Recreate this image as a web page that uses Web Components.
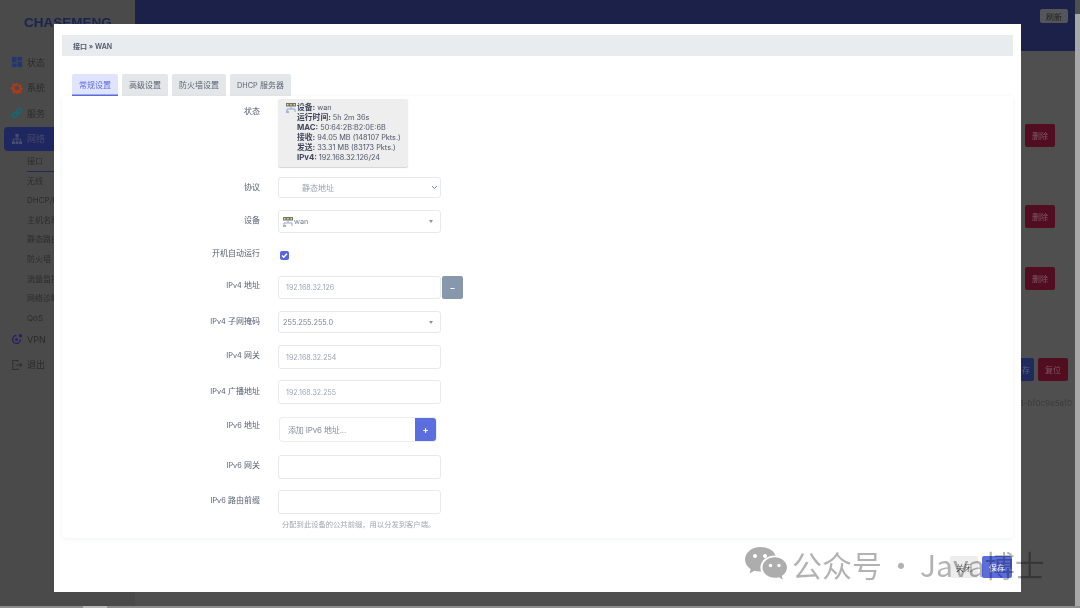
<!DOCTYPE html>
<html lang="zh">
<head>
<meta charset="utf-8">
<title>接口 » WAN</title>
<style>
html, body { margin: 0; height: 608px; overflow: hidden; background: #4f4f4f; }
body { font-family: Inter, "Noto Sans CJK SC", sans-serif; font-size: 8px; }
app-shell { filter: blur(.3px); }
.r1 { margin-top: 10px; } .r2 { margin-top: 11px; } .r3 { margin-top: 12px; }
.r4 { margin-top: 14px; } .r5 { margin-top: 15px; } .r6 { margin-top: 17px; }
</style>
</head>
<body>
<app-shell>
  <side-nav slot="side">
    <nav-item icon="grid" color="#21376f">状态</nav-item>
    <nav-item icon="gear" color="#a83a1e">系统</nav-item>
    <nav-item icon="link" color="#116a72">服务</nav-item>
    <nav-item icon="tree" color="#4a5070" active>网络</nav-item>
    <sub-list>
      <span class="on">接口</span><span>无线</span><span>DHCP/DNS</span><span>主机名映射</span><span>静态路由</span>
      <span>防火墙</span><span>流量监控</span><span>网络诊断</span><span>QoS</span>
    </sub-list>
    <nav-item icon="globe" color="#2a1d6e">VPN</nav-item>
    <nav-item icon="exit" color="#2f2f2f">退出</nav-item>
  </side-nav>
  <back-page slot="main"></back-page>
  <modal-dialog slot="modal">
    <span slot="crumb">接口 » WAN</span>
    <tab-strip slot="tabs"></tab-strip>
    <form-row label="状态" ly="7"><status-card></status-card></form-row>
    <form-row class="r1" label="协议" h="21"><select-field chevron>静态地址</select-field></form-row>
    <form-row class="r3" label="设备" h="23"><select-field dev dark>wan</select-field></form-row>
    <form-row class="r6" label="开机自动运行" h="11" ly="-2"><check-box></check-box></form-row>
    <form-row class="r5" label="IPv4 地址" h="23" ly="4"><text-field>192.168.32.126</text-field><icon-btn tone="grey">–</icon-btn></form-row>
    <form-row class="r3" label="IPv4 子网掩码" h="22"><select-field dark>255.255.255.0</select-field></form-row>
    <form-row class="r3" label="IPv4 网关" h="24"><text-field>192.168.32.254</text-field></form-row>
    <form-row class="r2" label="IPv4 广播地址" h="24" ly="6"><text-field>192.168.32.255</text-field></form-row>
    <form-row class="r4" label="IPv6 地址" h="23" ly="2"><add-field>添加 IPv6 地址...</add-field></form-row>
    <form-row class="r4" label="IPv6 网关" h="24"><text-field></text-field></form-row>
    <form-row class="r2" label="IPv6 路由前缀" h="24"><text-field></text-field></form-row>
    <form-hint>分配到此设备的公共前缀，用以分发到客户端。</form-hint>
    <foot-btn slot="foot">关闭</foot-btn>
    <foot-btn slot="foot" primary>保存</foot-btn>
  </modal-dialog>
  <wechat-mark slot="mark"></wechat-mark>
</app-shell>

<script>
function shadow(el, html) {
    el.attachShadow({mode: 'open'}).innerHTML = html;
}

// latin runs are set smaller than the CJK ones, the reference font is narrower than Inter
function latin(text) {
    return text.replace(/[A-Za-z0-9.»\/]+/g, m => `<span class="l">${m}</span>`);
}

const NAV_ICONS = {
    grid: '<rect x="1" y="1" width="5" height="6"/><rect x="7" y="1" width="5" height="4"/><rect x="1" y="8" width="5" height="4"/><rect x="7" y="6" width="5" height="6"/>',
    gear: '<path fill-rule="evenodd" d="M5.500 1h2l.3 1.500 1.200.5 1.300-.8 1.400 1.400-.8 1.300.5 1.200 1.500.3v2l-1.500.3-.5 1.200.8 1.300-1.400 1.400-1.300-.8-1.200.5-.3 1.500h-2l-.3-1.500-1.200-.5-1.300.8-1.400-1.400.8-1.300-.5-1.200L0 7.500v-2l1.500-.3.5-1.200-.8-1.300 1.400-1.400 1.300.8 1.200-.5zM6.500 4a2.500 2.500 0 1 0 0 5 2.500 2.500 0 0 0 0-5z"/>',
    link: '<path fill="none" stroke="currentColor" stroke-width="1.600" d="M5.200 7.800l2.600-2.600M8 2.200a1.900 1.900 0 0 1 2.800 2.800L9.600 6.200A1.900 1.900 0 0 1 6.900 3.400zM3.400 6.900a1.900 1.900 0 0 1 2.700 2.700L4.900 10.800A1.900 1.900 0 0 1 2.200 8z"/>',
    tree: '<rect x="4.800" y="1" width="3.400" height="3.200"/><rect x="1" y="9" width="3.200" height="3"/><rect x="4.900" y="9" width="3.200" height="3"/><rect x="8.800" y="9" width="3.200" height="3"/><path fill="none" stroke="currentColor" d="M6.500 4v5M2.600 9V6.500h7.800V9"/>',
    globe: '<path fill-rule="evenodd" d="M6 2a5 5 0 1 0 5 5H9.500A3.500 3.500 0 1 1 6 3.500z"/><circle cx="6" cy="7" r="1.700"/><circle cx="10.300" cy="3" r="1.800"/>',
    exit: '<path fill="none" stroke="currentColor" stroke-width="1.100" d="M7.500 3V1.500H2v10h5.500V10M5 6.500h6.500M9.500 4.500l2 2-2 2"/>'
};

class NavItem extends HTMLElement {
    constructor() {
        super();
        const ic = NAV_ICONS[this.getAttribute('icon')];
        shadow(this, `<style>
            :host { display: flex; align-items: center; height: 24px; margin: 0 0 1.500px 4px; padding-left: 7px; color: #2b2b2b; font-size: 9px; border-radius: 4px 0 0 4px; }
            :host([active]) { background: #1f2760; color: #454a66; }
            svg { width: 12px; height: 12px; margin-right: 4px; flex: none; fill: currentColor; }
        </style><svg viewBox="0 0 13 13" style="color:${this.getAttribute('color')}">${ic}</svg><slot></slot>`);
    }
}
customElements.define('nav-item', NavItem);

class SubList extends HTMLElement {
    constructor() {
        super();
        shadow(this, `<style>
            :host { display: flex; flex-direction: column; margin: 1px 0 6px 27px; height: 169px; color: #2c2c2c; font-size: 8px; white-space: nowrap; }
            ::slotted(span) { display: block; height: 19.600px; line-height: 19.600px; }
            ::slotted(.on) { box-shadow: inset 0 -1px 0 #1f2760; width: 27px; }
        </style><slot></slot>`);
    }
}
customElements.define('sub-list', SubList);

class SideNav extends HTMLElement {
    constructor() {
        super();
        shadow(this, `<style>
            :host { display: block; width: 135px; height: 100%; background: #4a4a4a; box-sizing: border-box; padding-top: 50px; position: relative; overflow: hidden; }
            .logo { position: absolute; left: 24px; top: 15px; color: #18244f; font: 700 13.500px "Liberation Sans", sans-serif; }
        </style><div class="logo">CHASEMENG</div><slot></slot>`);
    }
}
customElements.define('side-nav', SideNav);

class BackPage extends HTMLElement {
    constructor() {
        super();
        shadow(this, `<style>
            :host { display: flex; flex-direction: column; height: 100%; color: #6c6c6c; font-size: 8px; }
            .top { height: 51px; background: #1b2149; display: flex; justify-content: flex-end; padding: 9px 7px 0 0; box-sizing: border-box; flex: none; }
            .btn { display: flex; align-items: center; justify-content: center; border-radius: 2px; }
            .refresh { width: 28px; height: 14px; background: #55565a; color: #222; }
            .body { flex: 1; padding-right: 7px; position: relative; display: flex; flex-direction: column; align-items: flex-end; }
            .del { width: 30px; height: 23px; background: #520d21; color: #7d5b66; }
            .row { display: flex; gap: 4px; margin-top: 68px; }
            .save { width: 34px; height: 23px; background: #1e2a5c; color: #59648c; justify-content: flex-end; padding-right: 4px; box-sizing: border-box; }
            .uuid { margin: 17px -4px 0 0; color: #3c3c3c; }
        </style>
        <div class="top"><div class="btn refresh">刷新</div></div>
        <div class="body">
            <div class="btn del" style="margin:73px 13px 0 0">删除</div>
            <div class="btn del" style="margin:58px 13px 0 0">删除</div>
            <div class="btn del" style="margin:39px 13px 0 0">删除</div>
            <div class="row"><div class="btn save">存</div><div class="btn del">复位</div></div>
            <div class="uuid">95-bf0c9e5af0</div>
        </div>`);
    }
}
customElements.define('back-page', BackPage);

class DevIcon extends HTMLElement {
    constructor() {
        super();
        shadow(this, `<style>
            :host { display: inline-block; width: 10px; height: 10px; line-height: 0; opacity: .85; }
        </style><svg width="10" height="10" viewBox="0 0 10 10">
            <rect y="0" width="10" height="3.500" fill="#5d5d4d"/>
            <rect x="1" y="1" width="1.500" height="1.500" fill="#e6d88a"/><rect x="4.200" y="1" width="1.500" height="1.500" fill="#e6d88a"/><rect x="7.500" y="1" width="1.500" height="1.500" fill="#e6d88a"/>
            <path d="M5 3.500V6M1 9V6h8v3" fill="none" stroke="#7d97c8"/><rect y="8" width="3" height="2" fill="#8fa8d8"/>
        </svg>`);
    }
}
customElements.define('dev-icon', DevIcon);

const TAB_NAMES = ['常规设置', '高级设置', '防火墙设置', 'DHCP 服务器'];

class TabStrip extends HTMLElement {
    constructor() {
        super();
        const tabs = TAB_NAMES.map((t, i) => `<div class="tab ${i === 0 ? 'on' : ''}">${latin(t)}</div>`).join('');
        shadow(this, `<style>
            :host { display: flex; gap: 4px; margin: 18px 0 0 10px; height: 22px; }
            .tab { padding: 0 7px; line-height: 22px; background: #e3e7ea; color: #5a6472; border-radius: 2px 2px 0 0; white-space: nowrap; }
            .on { background: #e1e4ff; color: #5c6de0; box-shadow: inset 0 -1.500px 0 #5c6de0; }
            .l { font-size: 7.300px; }
        </style>${tabs}`);
    }
}
customElements.define('tab-strip', TabStrip);

class FormRow extends HTMLElement {
    constructor() {
        super();
        const h = this.getAttribute('h');
        const ly = this.getAttribute('ly') || 5;
        shadow(this, `<style>
            :host { display: flex; ${h ? 'height:' + h + 'px;' : ''} }
            .label { width: 198px; margin-right: 18px; margin-top: ${ly}px; flex: none; text-align: right; color: #555b70; box-sizing: border-box; white-space: nowrap; line-height: 11px; }
            .l { font-size: 7.300px; }
            .ctl { display: flex; gap: 1px; flex: 1; align-items: stretch; }
        </style><div class="label">${latin(this.getAttribute('label'))}</div><div class="ctl"><slot></slot></div>`);
    }
}
customElements.define('form-row', FormRow);

class StatusCard extends HTMLElement {
    constructor() {
        super();
        shadow(this, `<style>
            :host { display: block; width: 130px; height: 68px; background: #eeeeee; border-radius: 2px; box-shadow: 0 1px 1px #d4d4d4; box-sizing: border-box; padding: 4px 0 0 8px; color: #4c5468; line-height: 9.900px; white-space: nowrap; font-size: 7.300px; }
            .wrap { display: flex; gap: 1px; }
            b { font-weight: 700; color: #3e4559; font-size: 7.800px; }
        </style><div class="wrap"><dev-icon></dev-icon><div>
            <div><b>设备:</b> wan</div>
            <div><b>运行时间:</b> 5h 2m 36s</div>
            <div><b>MAC:</b> 50:64:2B:B2:0E:6B</div>
            <div><b>接收:</b> 94.05 MB (148107 Pkts.)</div>
            <div><b>发送:</b> 33.31 MB (83173 Pkts.)</div>
            <div><b>IPv4:</b> 192.168.32.126/24</div>
        </div></div>`);
    }
}
customElements.define('status-card', StatusCard);

class SelectField extends HTMLElement {
    constructor() {
        super();
        const arrow = this.hasAttribute('chevron')
            ? '<svg width="7" height="5" viewBox="0 0 7 5"><path d="M1 1l2.500 2.500L6 1" fill="none" stroke="#7c8694" stroke-width="1"/></svg>'
            : '<svg width="4" height="3" viewBox="0 0 4 3"><path d="M0 0h4L2 3z" fill="#8a94a2"/></svg>';
        const dev = this.hasAttribute('dev') ? '<dev-icon></dev-icon>' : '';
        shadow(this, `<style>
            :host { display: flex; align-items: center; width: 163px; box-sizing: border-box; border: 1px solid #e7e9ed; border-radius: 3px; background: #fff; padding: 0 6px 0 4px; color: #9aa3b4; gap: 1px; font-size: 7.300px; }
            :host([dark]) { color: #777f8e; padding-right: 7px; }
            :host([chevron]) { padding-left: 23px; font-size: 8px; padding-right: 2px; }
            .t { flex: 1; }
        </style>${dev}<span class="t"><slot></slot></span>${arrow}`);
    }
}
customElements.define('select-field', SelectField);

class TextField extends HTMLElement {
    constructor() {
        super();
        shadow(this, `<style>
            :host { display: flex; align-items: center; width: 163px; box-sizing: border-box; border: 1px solid #e7e9ed; border-radius: 3px; background: #fff; padding-left: 7px; color: #9aa3b4; font-size: 7.100px; }
        </style><slot></slot>`);
    }
}
customElements.define('text-field', TextField);

class IconBtn extends HTMLElement {
    constructor() {
        super();
        shadow(this, `<style>
            :host { display: flex; align-items: center; justify-content: center; width: 21px; border-radius: 2px; color: #fff; font-weight: 700; background: #5c6de0; }
            :host([tone="grey"]) { background: #8898ac; }
        </style><slot></slot>`);
    }
}
customElements.define('icon-btn', IconBtn);

class AddField extends HTMLElement {
    constructor() {
        super();
        shadow(this, `<style>
            :host { display: flex; width: 156px; margin-left: 2px; box-sizing: border-box; border-radius: 3px; box-shadow: 0 0 0 1px #eceef1; overflow: hidden; background: #fff; }
            .t { flex: 1; display: flex; align-items: center; padding-left: 8px; color: #858c9b; letter-spacing: -.15px; }
            .b { width: 21px; display: flex; align-items: center; justify-content: center; background: #5c6de0; color: #fff; font-weight: 700; font-size: 9px; }
        </style><div class="t"><slot></slot></div><div class="b">+</div>`);
    }
}
customElements.define('add-field', AddField);

class CheckBox extends HTMLElement {
    constructor() {
        super();
        shadow(this, `<style>
            :host { display: block; width: 9px; height: 9px; margin: 1px 0 0 2px; background: #5567dc; border-radius: 2px; line-height: 0; }
        </style><svg width="9" height="9" viewBox="0 0 9 9"><path d="M2 4.600l1.700 1.700L7 2.800" fill="none" stroke="#fff" stroke-width="1.400"/></svg>`);
    }
}
customElements.define('check-box', CheckBox);

class FormHint extends HTMLElement {
    constructor() {
        super();
        shadow(this, `<style>
            :host { display: block; margin: 5px 0 0 220px; color: #a3a6b0; font-size: 7.300px; line-height: 11px; white-space: nowrap; }
        </style><slot></slot>`);
    }
}
customElements.define('form-hint', FormHint);

class FootBtn extends HTMLElement {
    constructor() {
        super();
        shadow(this, `<style>
            :host { display: flex; align-items: center; justify-content: center; height: 22px; width: 28px; background: #ededee; color: #555; border-radius: 2px; }
            :host([primary]) { width: 30px; background: #5c6de0; color: #fff; }
        </style><slot></slot>`);
    }
}
customElements.define('foot-btn', FootBtn);

class ModalDialog extends HTMLElement {
    constructor() {
        super();
        shadow(this, `<style>
            :host { position: absolute; left: 54px; top: 24px; width: 967px; height: 568px; background: #fff; box-sizing: border-box; padding: 11px 8px 0; display: flex; flex-direction: column; }
            .crumb { height: 21px; background: #e9ecef; padding-left: 11px; display: flex; align-items: center; color: #4f5668; font-weight: 600; font-size: 7px; flex: none; }
            .card { height: 442px; box-sizing: border-box; padding-top: 3px; background: #fff; border-radius: 3px; box-shadow: 0 1px 4px rgba(30,50,70,.07); flex: none; }
            .foot { display: flex; justify-content: flex-end; gap: 4px; margin: 18px 1px 0 0; }
        </style>
        <div class="crumb"><slot name="crumb"></slot></div>
        <slot name="tabs"></slot>
        <div class="card"><slot></slot></div>
        <div class="foot"><slot name="foot"></slot></div>`);
    }
}
customElements.define('modal-dialog', ModalDialog);

class WechatMark extends HTMLElement {
    constructor() {
        super();
        shadow(this, `<style>
            :host { position: absolute; left: 745px; top: 545px; display: flex; align-items: center; gap: 5px; color: rgba(0,0,0,.3); font: 30px "Noto Sans CJK SC", sans-serif; white-space: nowrap; height: 38px; }
            svg { width: 42px; height: 36px; fill: rgba(0,0,0,.32); flex: none; }
            .d { margin: 0 4px 0 4px; }
        </style><svg viewBox="0 0 42 36">
            <path d="M15 1C7 1 0 6.500 0 13.500c0 4 2.200 7.300 5.700 9.600L4.500 27.500l5-2.700c1.700.5 3.500.8 5.300.8h1.300c-.5-1.400-.7-2.700-.7-4 0-6.700 6.300-12 14-12 .4 0 .9 0 1.300.1C29 4.500 22.600 1 15 1z"/>
            <path d="M42 21.500c0-5.700-5.600-10.300-12.300-10.300S17.500 15.800 17.500 21.500s5.600 10.300 12.200 10.300c1.500 0 2.900-.2 4.200-.6l3.900 2.200-1-3.500c3.200-2 5.200-5 5.200-8.400z"/>
            <circle cx="10" cy="10" r="2" fill="#fff"/><circle cx="20" cy="10" r="2" fill="#fff"/>
            <circle cx="25.500" cy="19.500" r="1.700" fill="#fff"/><circle cx="34" cy="19.500" r="1.700" fill="#fff"/>
        </svg><span>公众号<span class="d">·</span>Java博士</span>`);
    }
}
customElements.define('wechat-mark', WechatMark);

class AppShell extends HTMLElement {
    constructor() {
        super();
        shadow(this, `<style>
            :host { display: block; position: relative; width: 1080px; height: 608px; overflow: hidden; background: #4f4f4f; }
            .cols { display: flex; height: 606px; }
            .main { flex: 1; min-width: 0; }
            .sb { width: 5px; flex: none; margin-top: 14px; background: #a8a8a8; }
            .bottom { height: 2px; background: #8d8d8d; display: flex; }
            .bottom i { display: block; width: 24px; margin-left: 83px; background: #b8b8b8; }
        </style>
        <div class="cols">
            <slot name="side"></slot>
            <div class="main"><slot name="main"></slot></div>
            <div class="sb"></div>
        </div>
        <div class="bottom"><i></i></div>
        <slot name="modal"></slot>
        <slot name="mark"></slot>`);
    }
}
customElements.define('app-shell', AppShell);
</script>
</body>
</html>
